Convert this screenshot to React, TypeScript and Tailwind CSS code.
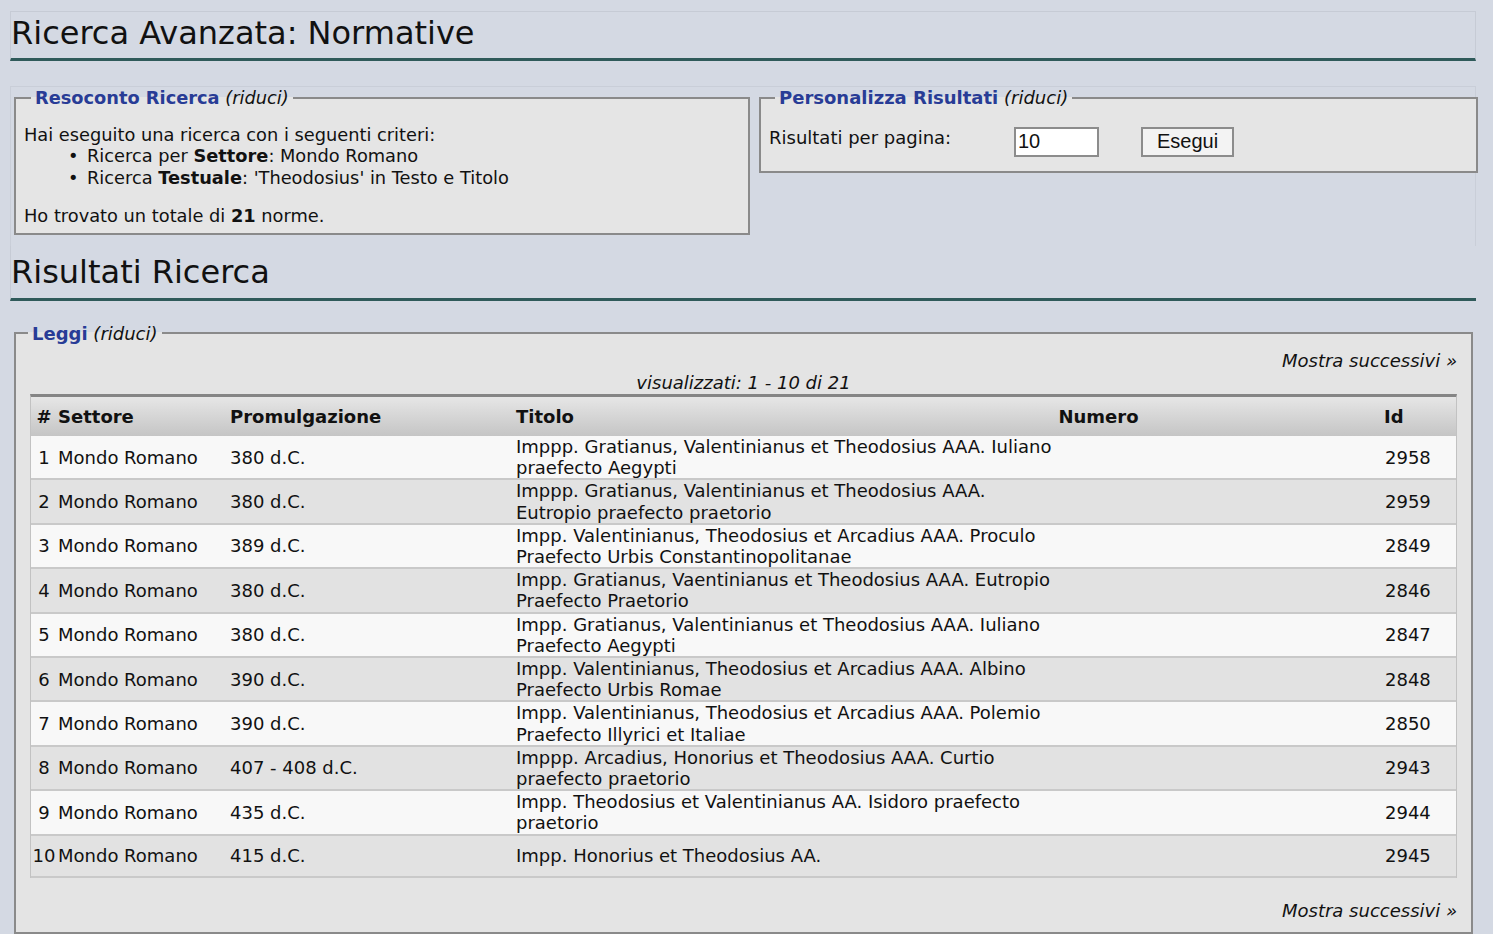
import React from 'react';

interface Norma {
  n: number;
  settore: string;
  data: string;
  titolo: string;
  id: number;
}

const norme: Norma[] = [
  { n: 1, settore: 'Mondo Romano', data: '380 d.C.', titolo: 'Imppp. Gratianus, Valentinianus et Theodosius AAA. Iuliano praefecto Aegypti', id: 2958 },
  { n: 2, settore: 'Mondo Romano', data: '380 d.C.', titolo: 'Imppp. Gratianus, Valentinianus et Theodosius AAA. Eutropio praefecto praetorio', id: 2959 },
  { n: 3, settore: 'Mondo Romano', data: '389 d.C.', titolo: 'Impp. Valentinianus, Theodosius et Arcadius AAA. Proculo Praefecto Urbis Constantinopolitanae', id: 2849 },
  { n: 4, settore: 'Mondo Romano', data: '380 d.C.', titolo: 'Impp. Gratianus, Vaentinianus et Theodosius AAA. Eutropio Praefecto Praetorio', id: 2846 },
  { n: 5, settore: 'Mondo Romano', data: '380 d.C.', titolo: 'Impp. Gratianus, Valentinianus et Theodosius AAA. Iuliano Praefecto Aegypti', id: 2847 },
  { n: 6, settore: 'Mondo Romano', data: '390 d.C.', titolo: 'Impp. Valentinianus, Theodosius et Arcadius AAA. Albino Praefecto Urbis Romae', id: 2848 },
  { n: 7, settore: 'Mondo Romano', data: '390 d.C.', titolo: 'Impp. Valentinianus, Theodosius et Arcadius AAA. Polemio Praefecto Illyrici et Italiae', id: 2850 },
  { n: 8, settore: 'Mondo Romano', data: '407 - 408 d.C.', titolo: 'Imppp. Arcadius, Honorius et Theodosius AAA. Curtio praefecto praetorio', id: 2943 },
  { n: 9, settore: 'Mondo Romano', data: '435 d.C.', titolo: 'Impp. Theodosius et Valentinianus AA. Isidoro praefecto praetorio', id: 2944 },
  { n: 10, settore: 'Mondo Romano', data: '415 d.C.', titolo: 'Impp. Honorius et Theodosius AA.', id: 2945 },
];

const cols = 'grid grid-cols-[26px_166px_286px_547px_85px_1fr_78px]';

const Legend = ({ title, className }: { title: string; className: string }) => (
  <legend className={className}>
    <span className="font-bold text-[#283c96]">{title}</span> <span className="italic">(riduci)</span>
  </legend>
);

const App = () => {
  return (
    <div className="min-h-[934px] bg-[#d4d9e3] pl-[10px] pr-[17px] pt-[11px] pb-1 text-[18px] leading-[21.5px] text-[#111] font-['DejaVu_Sans',Verdana,sans-serif]">
      {/* Titolo pagina */}
      <div className="h-[50px] border border-[#c6cbd5] border-b-[3px] border-b-[#2f5a5a]">
        <h1 className="text-[32px] leading-[40px] pt-[1px]">Ricerca Avanzata: Normative</h1>
      </div>

      {/* Riepilogo + personalizza */}
      <div className="mt-[25px] flex items-start gap-[9px] border-t border-l border-r border-[#c9ced8] pl-[3px] pb-[11px]">
        <fieldset className="w-[736px] border-2 border-[#8a8a8a] bg-[#e5e5e5] px-[8px] pt-[15px] pb-[6px] text-[17.8px]">
          <Legend title="Resoconto Ricerca" className="ml-[7px] px-[4px]" />
          <p>Hai eseguito una ricerca con i seguenti criteri:</p>
          <ul className="pl-[44px] mb-[17px]">
            <li className="flex">
              <span className="w-[19px]">•</span>
              <span>
                Ricerca per <b>Settore</b>: Mondo Romano
              </span>
            </li>
            <li className="flex">
              <span className="w-[19px]">•</span>
              <span>
                Ricerca <b>Testuale</b>: 'Theodosius' in Testo e Titolo
              </span>
            </li>
          </ul>
          <p>
            Ho trovato un totale di <b>21</b> norme.
          </p>
        </fieldset>

        <fieldset className="w-[719px] -mr-[3px] border-2 border-[#8a8a8a] bg-[#e5e5e5] px-[8px] pt-[18px] pb-[14px]">
          <Legend title="Personalizza Risultati" className="ml-[6px] px-[4px]" />
          <div className="flex items-start">
            <span className="w-[245px]">Risultati per pagina:</span>
            <input
              defaultValue="10"
              className="w-[85px] h-[30px] border-2 border-[#8c8c8c] bg-white pl-[2px] text-[20px] font-['Liberation_Sans',Arial,sans-serif] outline-none"
            />
            <button className="ml-[42px] w-[93px] h-[30px] border-2 border-[#8c8c8c] bg-[#f3f3f3] text-[20px] font-['Liberation_Sans',Arial,sans-serif]">
              Esegui
            </button>
          </div>
        </fieldset>
      </div>

      {/* Risultati */}
      <div className="h-[55px] border-l border-[#c6cbd5] border-b-[3px] border-b-[#2f5a5a]">
        <h2 className="text-[32px] leading-[40px] pt-[6px]">Risultati Ricerca</h2>
      </div>

      <fieldset className="mt-[22px] ml-[4px] w-[1459px] border-2 border-[#8a8a8a] bg-[#e4e4e4] px-[14px] pb-[10px]">
        <Legend title="Leggi" className="-ml-[2px] px-[4px]" />
        <div className="mt-[6px] text-right italic">Mostra successivi »</div>
        <div className="text-center italic">visualizzati: 1 - 10 di 21</div>

        <div className="mt-[1px] border-t-[3px] border-[#858585] border-l border-r border-l-[#c2c2c2] border-r-[#c2c2c2]">
          <div className={`${cols} h-[39px] items-center font-bold bg-gradient-to-b from-[#e6e6e6] to-[#c5c5c5]`}>
            <span className="text-center">#</span>
            <span className="pl-[1px]">Settore</span>
            <span className="pl-[7px]">Promulgazione</span>
            <span className="pl-[7px]">Titolo</span>
            <span className="text-center">Numero</span>
            <span />
            <span className="pl-[6px]">Id</span>
          </div>
          {norme.map((r, i) => (
            <div
              key={r.id}
              className={`${cols} min-h-[42.4px] items-center leading-[21.2px] border-b-2 border-[#c9c9c9] ${i % 2 === 0 ? 'bg-[#f8f8f8]' : 'bg-[#e2e2e2]'}`}
            >
              <span className="text-center">{r.n}</span>
              <span className="pl-[1px]">{r.settore}</span>
              <span className="pl-[7px]">{r.data}</span>
              <span className="pl-[7px]">{r.titolo}</span>
              <span />
              <span />
              <span className="pl-[7px]">{r.id}</span>
            </div>
          ))}
        </div>

        <div className="mt-[22px] text-right italic">Mostra successivi »</div>
      </fieldset>
    </div>
  );
};

export default App;
